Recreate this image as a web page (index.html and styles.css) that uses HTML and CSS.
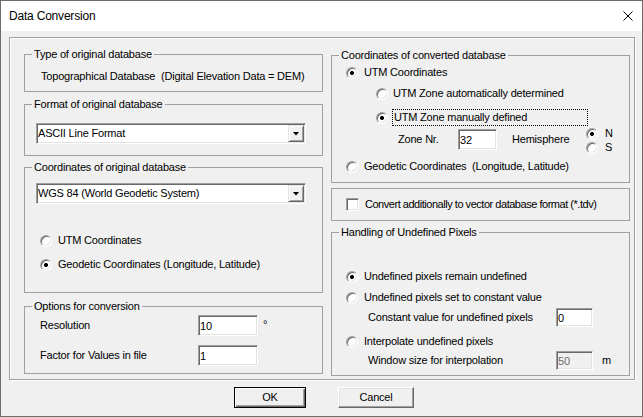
FILE: index.html
```html
<!DOCTYPE html>
<html lang="en">
<head>
<meta charset="utf-8">
<title>Data Conversion</title>
<link rel="stylesheet" href="styles.css">
</head>
<body>
<div class="window">
  <div class="titlebar">
    <span class="title">Data Conversion</span>
    <svg class="close" width="10" height="10" viewBox="0 0 10 10"><path d="M0.5 0.5L9.5 9.5M9.5 0.5L0.5 9.5" stroke="#000" stroke-width="1" fill="none"/></svg>
  </div>
  <div class="client">
    <div class="frame">
      <div class="col col-left">
        <fieldset class="grp g-type">
          <legend>Type of original database</legend>
          <div class="static">Topographical Database  (Digital Elevation Data = DEM)</div>
        </fieldset>
        <fieldset class="grp g-format">
          <legend>Format of original database</legend>
          <div class="combo"><span class="combo-text">ASCII Line Format</span><span class="combo-btn"><span class="arrow"></span></span></div>
        </fieldset>
        <fieldset class="grp g-coords">
          <legend>Coordinates of original database</legend>
          <div class="combo"><span class="combo-text">WGS 84 (World Geodetic System)</span><span class="combo-btn"><span class="arrow"></span></span></div>
          <div class="rrow l-utm"><span class="radio"></span>UTM Coordinates</div>
          <div class="rrow l-geo"><span class="radio on"></span>Geodetic Coordinates (Longitude, Latitude)</div>
        </fieldset>
        <fieldset class="grp g-options">
          <legend>Options for conversion</legend>
          <div class="opt-grid">
            <span>Resolution</span><input class="field opt-field" value="10"><span class="deg">°</span>
            <span>Factor for Values in file</span><input class="field opt-field" value="1"><span></span>
          </div>
        </fieldset>
      </div>
      <div class="col col-right">
        <fieldset class="grp g-conv">
          <legend>Coordinates of converted database</legend>
          <div class="rrow r-utm"><span class="radio on"></span>UTM Coordinates</div>
          <div class="rrow r-auto"><span class="radio"></span>UTM Zone automatically determined</div>
          <div class="rrow r-manual"><span class="radio on"></span><span class="focus">UTM Zone manually defined</span></div>
          <div class="zone-row">
            <div class="zone-fields">
              <span class="zone-label">Zone Nr.</span><input class="field zone-field" value="32"><span class="hemi-label">Hemisphere</span>
            </div>
            <div class="hemi-radios">
              <div class="rrow hemi"><span class="radio on"></span>N</div>
              <div class="rrow hemi"><span class="radio"></span>S</div>
            </div>
          </div>
          <div class="rrow r-geo"><span class="radio"></span>Geodetic Coordinates  (Longitude, Latitude)</div>
        </fieldset>
        <fieldset class="grp g-check">
          <div class="rrow check-row"><span class="check"></span><span class="check-text">Convert additionally to vector database format (*.tdv)</span></div>
        </fieldset>
        <fieldset class="grp g-undef">
          <legend>Handling of Undefined Pixels</legend>
          <div class="rrow u1"><span class="radio on"></span>Undefined pixels remain undefined</div>
          <div class="rrow u2"><span class="radio"></span>Undefined pixels set to constant value</div>
          <div class="u-field uf1"><span class="u-label">Constant value for undefined pixels</span><input class="field small-field" value="0"></div>
          <div class="rrow u3"><span class="radio"></span>Interpolate undefined pixels</div>
          <div class="u-field uf2"><span class="u-label">Window size for interpolation</span><input class="field small-field disabled" value="50" disabled><span class="unit">m</span></div>
        </fieldset>
      </div>
    </div>
    <div class="buttons">
      <button class="btn btn-ok default">OK</button>
      <button class="btn btn-cancel">Cancel</button>
    </div>
  </div>
</div>
</body>
</html>
```
FILE: styles.css
```css
* { box-sizing: border-box; }
body {
  margin: 0;
  background: #f0f0f0;
  font-family: "Liberation Sans", Arial, sans-serif;
  font-size: 11px;
  line-height: 13px;
  letter-spacing: -0.2px;
  color: #000;
}
.window {
  width: 643px;
  height: 417px;
  border: 1px solid #6b6b6b;
  background: #f0f0f0;
  display: flex;
  flex-direction: column;
}
.titlebar {
  height: 30px;
  flex: none;
  background: #fff;
  display: flex;
  align-items: center;
  justify-content: space-between;
  padding: 0 9px 0 8px;
}
.title { font-size: 12px; letter-spacing: -0.2px; }
.close { display: block; }
.client { flex: 1; padding: 6px 0 0 8px; }
.frame {
  width: 626px;
  height: 343px;
  border: 1px solid #a0a0a0;
  box-shadow: 1px 1px 0 #fff, inset 1px 1px 0 #fff;
  padding: 10px 4px 0 14px;
  display: flex;
  gap: 8px;
  align-items: flex-start;
}
.col { width: 299px; display: flex; flex-direction: column; }
.col-right { margin-top: 1px; }

.grp {
  margin: 0;
  padding: 0;
  border: 1px solid #a0a0a0;
  min-width: 0;
}
legend {
  padding: 0 2px;
  margin-left: 7px;
  line-height: 13px;
}

/* left column */
.g-type { height: 44px; }
.static { margin: 9px 0 0 16px; white-space: pre; }
.g-format { height: 58px; margin-top: 6px; }
.g-format .combo { margin: 12px 0 0 11px; }
.g-coords { height: 132px; margin-top: 5px; }
.g-coords .combo { margin: 9px 0 0 11px; }
.l-utm { margin: 30px 0 0 15px; }
.l-geo { margin: 11px 0 0 15px; }
.g-options { height: 74px; margin-top: 7px; }
.opt-grid {
  display: grid;
  grid-template-columns: 158px 60px auto;
  row-gap: 9px;
  margin: 2px 0 0 15px;
  align-items: center;
}
.opt-field { width: 60px; height: 21px; }
.deg { align-self: start; margin-left: 5px; margin-top: 3px; }

/* combo */
.combo {
  width: 270px;
  height: 21px;
  display: flex;
  padding: 1px;
  background: #fff;
  border: 1px solid;
  border-color: #a0a0a0 #fff #fff #a0a0a0;
  box-shadow: inset 1px 1px 0 #696969, inset -1px -1px 0 #e3e3e3;
}
.combo-text { flex: 1; line-height: 17px; padding-left: 0; white-space: pre; }
.combo-btn {
  width: 16px;
  height: 17px;
  flex: none;
  background: #f0f0f0;
  border: 1px solid;
  border-color: #e3e3e3 #696969 #696969 #e3e3e3;
  box-shadow: inset 1px 1px 0 #fff, inset -1px -1px 0 #a0a0a0;
  display: flex;
  align-items: center;
  justify-content: center;
}
.arrow {
  width: 7px;
  height: 4px;
  background: #000;
  clip-path: polygon(0 0, 100% 0, 50% 100%);
}

/* radios / checkbox */
.rrow { display: flex; align-items: center; min-height: 13px; white-space: pre; }
.radio {
  width: 12px;
  height: 12px;
  flex: none;
  margin-right: 6px;
  border-radius: 50%;
  background: #fff;
  border: 1px solid;
  border-color: #a0a0a0 #fff #fff #a0a0a0;
  box-shadow: inset 1px 1px 0 #696969, inset -1px -1px 0 #e3e3e3;
}
.radio.on {
  background: radial-gradient(circle at 50% 50%, #000 0, #000 1.7px, #fff 2.3px);
}
.check {
  width: 13px;
  height: 13px;
  flex: none;
  margin-right: 6px;
  background: #fff;
  border: 1px solid;
  border-color: #a0a0a0 #fff #fff #a0a0a0;
  box-shadow: inset 1px 1px 0 #696969, inset -1px -1px 0 #e3e3e3;
}
.check-text { letter-spacing: -0.47px; }

/* inputs */
.field {
  font: inherit;
  letter-spacing: inherit;
  color: #000;
  background: #fff;
  border: 1px solid;
  border-color: #a0a0a0 #fff #fff #a0a0a0;
  box-shadow: inset 1px 1px 0 #696969, inset -1px -1px 0 #e3e3e3;
  padding: 0 0 0 1px;
  margin: 0;
  outline: none;
}
.field.disabled { background: #f0f0f0; color: #6d6d6d; }

/* right column */
.g-conv { height: 134px; }
.r-utm { margin: 4px 0 0 14px; }
.r-auto { margin: 8px 0 0 44px; }
.r-auto .radio { margin-right: 5px; }
.r-manual { margin: 9px 0 0 44px; }
.r-manual .radio { margin-right: 4px; }
.focus {
  width: 196px;
  border: 1px dotted #000;
  padding: 1px 0 1px 1px;
  line-height: 13px;
}
.zone-row { display: flex; margin-top: 1px; }
.zone-fields { display: flex; align-items: center; margin: 2px 0 0 66px; height: 21px; }
.zone-label { width: 60px; }
.zone-field { width: 39px; height: 21px; }
.hemi-label { width: 74px; margin-left: 15px; }
.hemi-radios { display: flex; flex-direction: column; gap: 1px; }
.hemi .radio { margin-right: 7px; }
.r-geo { margin: 6px 0 0 14px; }

.g-check { height: 33px; margin-top: 5px; }
.check-row { margin: 9px 0 0 14px; }

.g-undef { height: 150px; margin-top: 5px; }
.u1 { margin: 31px 0 0 14px; }
.u2 { margin: 8px 0 0 14px; }
.u3 { margin: 8px 0 0 14px; }
.u-field { display: flex; align-items: center; margin-left: 36px; }
.uf1 { margin-top: 4px; }
.uf2 { margin-top: 3px; }
.u-label { width: 188px; }
.small-field { width: 37px; height: 19px; }
.unit { margin-left: 9px; }

/* buttons */
.buttons { display: flex; gap: 32px; margin: 7px 0 0 225px; }
.btn {
  height: 21px;
  font: inherit;
  letter-spacing: inherit;
  color: #000;
  background: #f0f0f0;
  border: 1px solid;
  border-color: #fff #696969 #696969 #fff;
  box-shadow: inset -1px -1px 0 #a0a0a0, inset 1px 1px 0 #e3e3e3;
  padding: 0;
}
.btn-ok { width: 72px; }
.btn-cancel { width: 76px; }
.btn.default {
  border-color: #000;
  box-shadow: inset 1px 1px 0 #fff, inset -1px -1px 0 #696969, inset -2px -2px 0 #a0a0a0;
}
```
